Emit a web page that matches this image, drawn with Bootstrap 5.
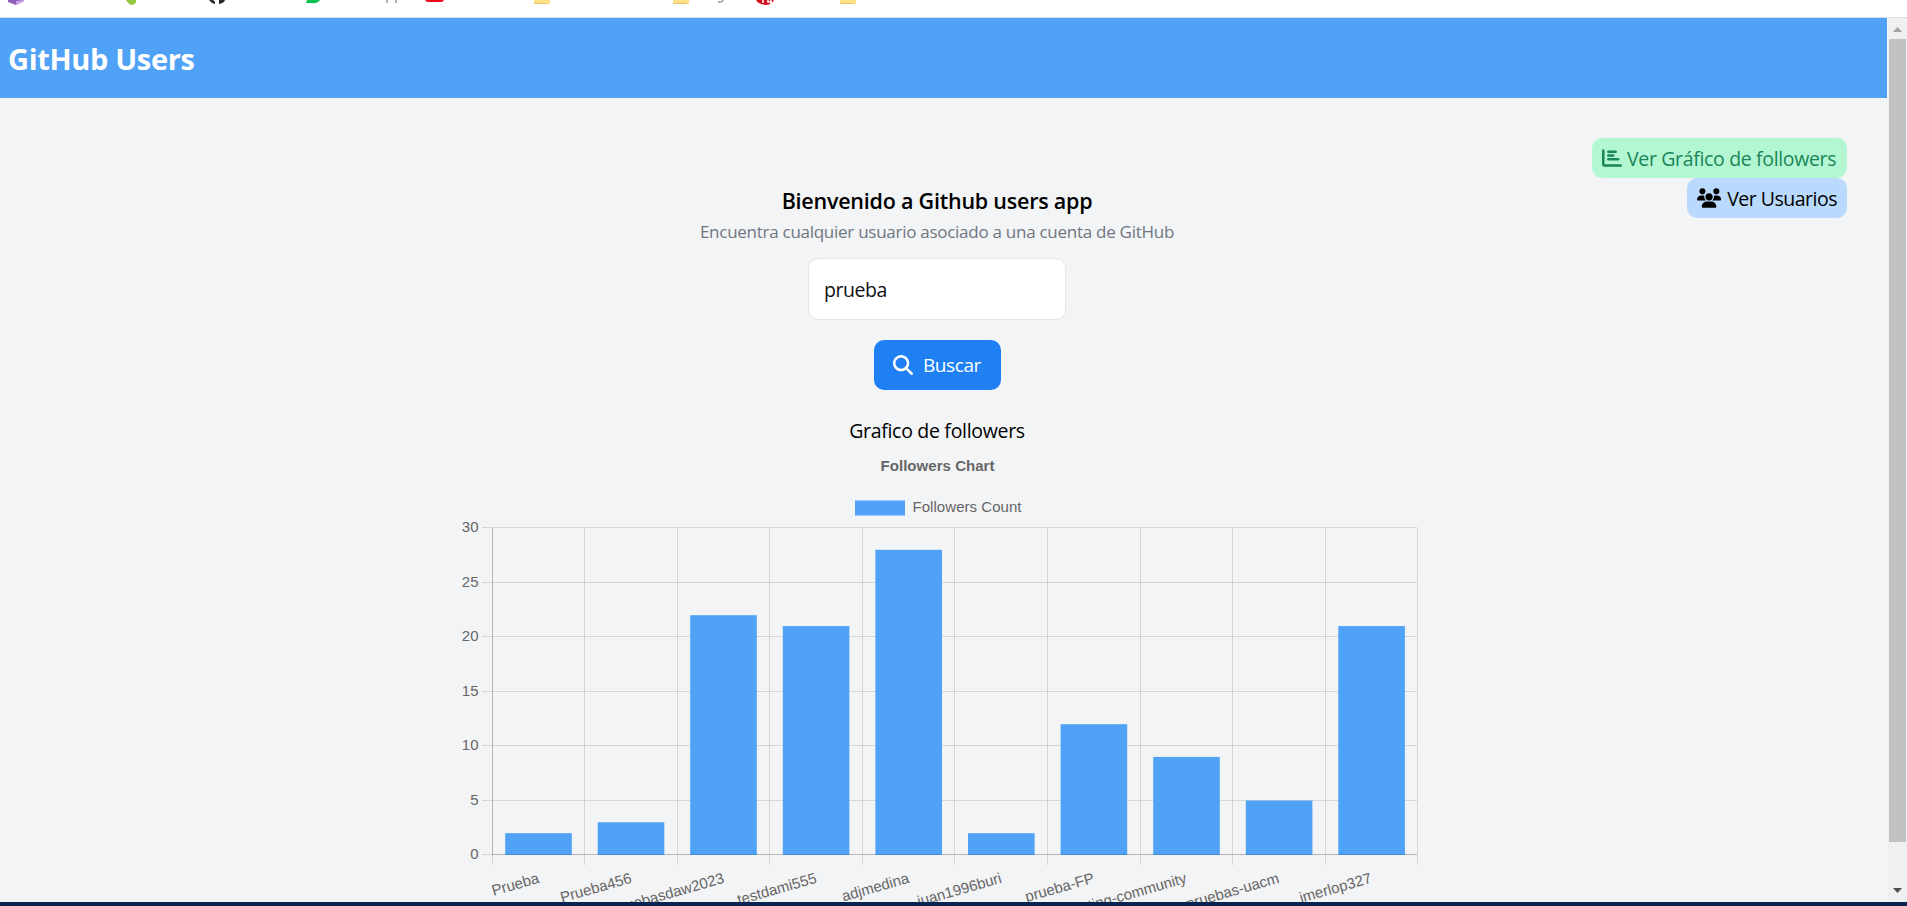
<!DOCTYPE html>
<html lang="es">
<head>
<meta charset="utf-8">
<title>GitHub Users</title>
<meta name="viewport" content="width=device-width, initial-scale=1">
<link href="https://cdn.jsdelivr.net/npm/bootstrap@5.3.0/dist/css/bootstrap.min.css" rel="stylesheet">
<style>
  body { height: 906px; font-family: "Open Sans", "Noto Sans", sans-serif; font-size: 20px; line-height: 30px; color: #000; background: #fff; }
  .bookmarks { height: 18px; flex: none; border-bottom: 1px solid #dadce0; }
  .bookmarks svg { display: block; }
  .page { background: #f3f4f6; min-width: 0; }
  .topbar { height: 80px; padding: 2px 8px 0; background: #4fa2f6; }
  .topbar h1 { font-size: 29px; font-weight: 700; letter-spacing: -.33px; line-height: 40px; color: #fff; }
  .actions { padding: 40px 40px 0 0; height: 85px; }
  .pill { height: 40px; border-radius: 10px; padding: 0 10px; white-space: nowrap; font-size: 19.5px; }
  .pill-green { background: #b3f7d2; color: #1a8557; width: 255px; }
  .pill-blue { background: #badafd; color: #000; width: 160px; }
  .pill span { letter-spacing: -.34px; padding: 2px 0 0 1px; }
  .pill-blue span { letter-spacing: -.5px; padding-left: 2px; }
  .hero { width: 1874px; }
  .hero h2 { font-size: 21.5px; font-weight: 600; line-height: 36px; letter-spacing: -.23px; margin: 0; }
  .subtitle { font-size: 17px; line-height: 25px; color: #6f7681; letter-spacing: -.27px; margin: 0 0 14px; }
  .search-box { width: 258px; height: 62px; border: 1px solid #e5e7eb; border-radius: 10px; font-size: 19.5px; letter-spacing: -.45px; padding: 0 15px; color: #111; }
  .search-box:focus { box-shadow: none; }
  .search-btn { width: 127px; height: 50px; margin-top: 20px; border: 0; border-radius: 10px; background: #1e80f2; color: #fff; font-size: 19px; gap: 10px; padding: 0; letter-spacing: -.4px; }
  .chart-name { margin: 26px 0 0; line-height: 30px; font-size: 19.5px; letter-spacing: -.3px; }
  .plot { font-family: "Liberation Sans", Arial, sans-serif; font-size: 15px; fill: #666; display: block; flex: none; }
  .scroller { width: 20px; flex: none; background: #f0f0f0; border-left: 1px solid #f8f8f8; }
  .thumb { width: 17px; height: 803px; background: #c1c1c1; }
  .taskbar { height: 4px; flex: none; background: #082552; }
</style>
</head>
<body class="d-flex flex-column overflow-hidden">
  <div class="bookmarks">
    <svg width="1907" height="17" viewBox="0 0 1907 17">
      <path d="M8 0h16v1l-8 4-8-3z" fill="#8e5bb5"/><path d="M16 1l8-1v1l-8 4z" fill="#c9a0e6"/>
      <path d="M126 0h10v2q-1 3-5 3-3-1-5-5z" fill="#92c83e"/>
      <path d="M209 0h4l2 2v2q-4-1-6-4zM219 0h6q-1 3-6 4z" fill="#24292f"/>
      <path d="M307 0h13q-3 4-9 3l-5 0z" fill="#0bc14f"/>
      <path d="M387 0v3M396 0v3" stroke="#666"/>
      <path d="M425 0h19q-1 2-3 2h-13q-2 0-3-2z" fill="#f5061d"/>
      <g fill="#ffe18a"><path d="M534 0h16v4h-16z"/><path d="M673 0h16v4h-16z"/><path d="M840 0h16v4h-16z"/></g>
      <g stroke="#e9c45e"><path d="M534 3.500h13M673 3.500h13M840 3.500h13"/></g>
      <path d="M723 0q0 2.500-5 2" fill="none" stroke="#555"/>
      <path d="M756 0h18q-2 5-9 5-7-1-9-5z" fill="#d5101e"/><path d="M763 0v3M768 0v2h4M771 0v4" stroke="#fff" fill="none" stroke-width="1.500"/>
    </svg>
  </div>

  <div class="d-flex flex-grow-1 overflow-hidden">
    <main class="page flex-grow-1 overflow-hidden">
      <header class="topbar d-flex align-items-center"><h1 class="m-0">GitHub Users</h1></header>

      <div class="actions d-flex flex-column align-items-end">
        <a class="pill pill-green d-flex align-items-center gap-1 text-decoration-none flex-shrink-0" href="#">
          <svg width="20" height="20" viewBox="0 0 512 512" fill="none" stroke="currentColor" stroke-width="64" stroke-linecap="round"><path d="M32 64v336q0 48 48 48h400"/><path d="M160 96h192M160 192h128M160 288h256" stroke-width="60"/></svg>
          <span>Ver Gráfico de followers</span>
        </a>
        <a class="pill pill-blue d-flex align-items-center gap-1 text-decoration-none flex-shrink-0" href="#">
          <svg width="25" height="20" viewBox="0 0 640 512" fill="currentColor"><path d="M144 0a80 80 0 1 1 0 160A80 80 0 1 1 144 0zM512 0a80 80 0 1 1 0 160A80 80 0 1 1 512 0zM0 298.700C0 239.800 47.800 192 106.700 192h42.700c15.900 0 31 3.500 44.600 9.700-1.300 7.200-1.900 14.700-1.900 22.300 0 38.200 16.800 72.500 43.300 96H21.300C9.600 320 0 310.400 0 298.700zM405.300 320h-.7c26.600-23.500 43.300-57.800 43.300-96 0-7.600-.7-15-1.900-22.300 13.600-6.300 28.700-9.700 44.600-9.700h42.700C592.200 192 640 239.800 640 298.700c0 11.800-9.600 21.300-21.300 21.300H405.300zM224 224a96 96 0 1 1 192 0 96 96 0 1 1-192 0zM128 485.300C128 411.700 187.700 352 261.300 352h117.400C452.300 352 512 411.700 512 485.300c0 14.700-11.900 26.700-26.700 26.700H154.700c-14.700 0-26.700-11.900-26.700-26.700z"/></svg>
          <span>Ver Usuarios</span>
        </a>
      </div>

      <section class="hero d-flex flex-column align-items-center">
        <h2>Bienvenido a Github users app</h2>
        <p class="subtitle">Encuentra cualquier usuario asociado a una cuenta de GitHub</p>
        <input class="form-control search-box" type="text" value="prueba" aria-label="Usuario">
        <button class="btn search-btn d-flex align-items-center justify-content-center" type="button">
          <svg width="20" height="20" viewBox="0 0 512 512" fill="currentColor"><path d="M416 208c0 45.900-14.900 88.300-40 122.700L502.600 457.400c12.500 12.500 12.500 32.800 0 45.300s-32.800 12.500-45.300 0L330.700 376c-34.400 25.200-76.800 40-122.700 40C93.100 416 0 322.900 0 208S93.100 0 208 0s208 93.100 208 208zM208 352a144 144 0 1 0 0-288 144 144 0 1 0 0 288z"/></svg>
          <span>Buscar</span>
        </button>
        <p class="chart-name">Grafico de followers</p>

        <svg class="plot" width="1000" height="456" viewBox="437 446 1000 456">
          <text x="937.500" y="471" text-anchor="middle" font-weight="700" textLength="114">Followers Chart</text>
          <rect x="855" y="500.500" width="50" height="15" fill="#4fa2f6"/>
          <text x="912.500" y="512" textLength="109">Followers Count</text>
          <path stroke="#000" stroke-opacity=".12" fill="none" d="M482 527.500H1417M482 582.500H1417M482 636.500H1417M482 691.500H1417M482 745.500H1417M482 800.500H1417M482 854.500H1417M492.500 528V865M584.500 528V865M677.500 528V865M769.500 528V865M862.500 528V865M954.500 528V865M1047.500 528V865M1140.500 528V865M1232.500 528V865M1325.500 528V865M1417.500 528V865"/>
          <g fill="#4fa2f6">
            <rect x="505.200" y="833.200" width="66.600" height="21.800"/>
            <rect x="597.700" y="822.300" width="66.600" height="32.700"/>
            <rect x="690.200" y="615.200" width="66.600" height="239.800"/>
            <rect x="782.800" y="626.100" width="66.600" height="228.900"/>
            <rect x="875.400" y="549.800" width="66.600" height="305.200"/>
            <rect x="968" y="833.200" width="66.600" height="21.800"/>
            <rect x="1060.600" y="724.200" width="66.600" height="130.800"/>
            <rect x="1153.200" y="756.900" width="66.600" height="98.100"/>
            <rect x="1245.800" y="800.500" width="66.600" height="54.500"/>
            <rect x="1338.300" y="626.100" width="66.600" height="228.900"/>
          </g>
          <path stroke="#000" stroke-opacity=".14" d="M492.500 528V855M492 854.500H1417"/>
          <g text-anchor="end">
            <text x="478.500" y="532">30</text><text x="478.500" y="587">25</text><text x="478.500" y="641">20</text><text x="478.500" y="696">15</text><text x="478.500" y="750">10</text><text x="478.500" y="805">5</text><text x="478.500" y="859">0</text>
            <text transform="translate(540 882.500) rotate(-16)">Prueba</text>
            <text transform="translate(632.500 882.500) rotate(-16)">Prueba456</text>
            <text transform="translate(725 882.500) rotate(-16)">pruebasdaw2023</text>
            <text transform="translate(817.500 882.500) rotate(-16)">testdami555</text>
            <text transform="translate(910 882.500) rotate(-16)">adjmedina</text>
            <text transform="translate(1002.500 882.500) rotate(-16)">juan1996buri</text>
            <text transform="translate(1095 882.500) rotate(-16)">prueba-FP</text>
            <text transform="translate(1187.500 882.500) rotate(-16)">testing-community</text>
            <text transform="translate(1280 882.500) rotate(-16)">pruebas-uacm</text>
            <text transform="translate(1372.500 882.500) rotate(-16)">jmerlop327</text>
          </g>
        </svg>
      </section>
    </main>

    <aside class="scroller d-flex flex-column align-items-center" aria-hidden="true">
      <svg width="17" height="21" viewBox="0 0 17 21"><path d="M4 14l4.500-5 4.500 5z" fill="#a3a3a3"/></svg>
      <div class="thumb"></div>
      <svg class="mt-auto" width="17" height="21" viewBox="0 0 17 21"><path d="M4 7h9l-4.500 5z" fill="#505050"/></svg>
    </aside>
  </div>
  <div class="taskbar"></div>
<script src="https://cdn.jsdelivr.net/npm/bootstrap@5.3.0/dist/js/bootstrap.bundle.min.js"></script>
</body>
</html>
